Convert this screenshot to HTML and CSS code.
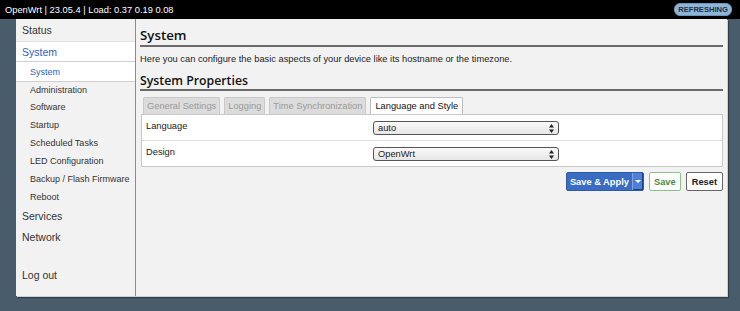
FILE: index.html
```html
<!DOCTYPE html>
<html>
<head>
<meta charset="utf-8">
<link rel="stylesheet" href="styles.css">
</head>
<body>
<header class="topbar">
  <span class="brand">OpenWrt | 23.05.4 | Load: 0.37 0.19 0.08</span>
  <span class="badge">REFRESHING</span>
</header>
<div class="panel">
  <nav class="sidebar">
    <ul class="menu">
      <li class="top">Status</li>
      <li class="top active">System</li>
      <li class="sub current">System</li>
      <li class="sub">Administration</li>
      <li class="sub">Software</li>
      <li class="sub">Startup</li>
      <li class="sub">Scheduled Tasks</li>
      <li class="sub">LED Configuration</li>
      <li class="sub">Backup / Flash Firmware</li>
      <li class="sub">Reboot</li>
      <li class="top">Services</li>
      <li class="top">Network</li>
      <li class="top logout">Log out</li>
    </ul>
  </nav>
  <main class="content">
    <h2 class="title">System</h2>
    <p class="desc">Here you can configure the basic aspects of your device like its hostname or the timezone.</p>
    <h3 class="section">System Properties</h3>
    <div class="tabs">
      <span class="tab">General Settings</span>
      <span class="tab">Logging</span>
      <span class="tab">Time Synchronization</span>
      <span class="tab active">Language and Style</span>
    </div>
    <div class="table">
      <div class="row">
        <span class="label">Language</span>
        <span class="select">auto<svg class="arrows" viewBox="0 0 5 9" width="5" height="9"><path d="M0 3.6 L2.5 0 L5 3.6 Z M0 5.4 L2.5 9 L5 5.4 Z" fill="#222"/></svg></span>
      </div>
      <div class="row">
        <span class="label">Design</span>
        <span class="select">OpenWrt<svg class="arrows" viewBox="0 0 5 9" width="5" height="9"><path d="M0 3.6 L2.5 0 L5 3.6 Z M0 5.4 L2.5 9 L5 5.4 Z" fill="#222"/></svg></span>
      </div>
    </div>
    <div class="actions">
      <span class="btn apply"><span class="apply-main">Save &amp; Apply</span><span class="apply-drop"><span class="caret"></span></span></span>
      <span class="btn save">Save</span>
      <span class="btn reset">Reset</span>
    </div>
  </main>
</div>
</body>
</html>
```
FILE: styles.css
```css
html, body {
  margin: 0;
  padding: 0;
}
body {
  background: #485c6c;
  font-family: "Liberation Sans", Arial, sans-serif;
  color: #222;
  width: 740px;
  height: 311px;
  overflow: hidden;
}
.topbar {
  height: 19px;
  background: #000;
  color: #fff;
  display: flex;
  align-items: center;
  justify-content: space-between;
  padding: 0 8px 0 5px;
  font-size: 9.3px;
}
.badge {
  background: #8fb5d6;
  color: #1d2f45;
  font-weight: bold;
  font-size: 7.6px;
  border-radius: 6px;
  padding: 1px 3px;
  border: 1px solid #6f98bd;
  line-height: 9px;
}
.panel {
  margin: 0 13px 0 16px;
  height: 277px;
  background: #f2f2f2;
  display: flex;
  box-shadow: 1px 1px 0 #cfcfcf, 2px 2px 1px #2f3d48;
}
.sidebar {
  width: 119px;
  border-right: 1px solid #8a8a8a;
  flex: none;
}
.menu {
  list-style: none;
  margin: 0;
  padding: 0;
}
.menu li {
  display: flex;
  align-items: center;
  color: #333;
}
.top {
  font-size: 10.5px;
  padding-left: 6px;
  height: 21px;
}
.top:first-child {
  height: 22px;
}
.top.active {
  background: #fff;
  color: #2f62c4;
  height: 19px;
  border-top: 1px solid #e2e2e2;
  border-bottom: 1px solid #cfcfcf;
}
.sub {
  font-size: 9px;
  padding-left: 14px;
  height: 18px;
}
.sub.current {
  background: #fff;
  color: #2f62c4;
  height: 19px;
  border-bottom: 1px solid #cfcfcf;
}
.sub:nth-child(4) {
  height: 16px;
}
.sub:nth-child(10) {
  height: 17px;
}
.top.logout {
  margin-top: 17px;
}
.content {
  flex: 1;
  padding: 0 4px 0 4px;
  min-width: 0;
}
.title {
  font-family: "Open Sans", "DejaVu Sans", sans-serif;
  font-weight: 600;
  font-size: 13.3px;
  margin: 6px 0 0 0;
  height: 20px;
  line-height: 20px;
  border-bottom: 2px solid #6b6b6b;
  color: #111;
}
.desc {
  font-size: 9.3px;
  margin: 6px 0 0 0;
  line-height: 12px;
}
.section {
  font-family: "Open Sans", "DejaVu Sans", sans-serif;
  font-weight: 600;
  font-size: 12.3px;
  margin: 7px 0 0 0;
  line-height: 17px;
  height: 17px;
  border-bottom: 2px solid #6b6b6b;
  color: #111;
}
.tabs {
  display: flex;
  gap: 4px;
  margin-top: 6px;
  padding-left: 3px;
  height: 17px;
}
.tab {
  font-size: 9.3px;
  color: #9a9a9a;
  background: #dcdcdc;
  border: 1px solid #c8c8c8;
  border-bottom: none;
  border-radius: 2px 2px 0 0;
  padding: 0 3px;
  display: flex;
  align-items: center;
}
.tab.active {
  background: #fff;
  color: #111;
  border-color: #bdbdbd;
  padding: 0 4px;
}
.table {
  margin-left: 1px;
  background: #fff;
  border: 1px solid #c8c8c8;
}
.row {
  display: flex;
  align-items: center;
  height: 25px;
}
.row + .row {
  border-top: 1px solid #dedede;
}
.label {
  font-size: 9.3px;
  width: 227px;
  padding-left: 4px;
  margin-top: -3px;
}
.select {
  position: relative;
  width: 180px;
  height: 12px;
  border: 1px solid #555;
  border-radius: 3px;
  background: linear-gradient(#fafafa, #e6e6e6);
  font-size: 9.3px;
  line-height: 12px;
  padding-left: 4px;
  box-sizing: content-box;
}
.arrows {
  position: absolute;
  right: 4px;
  top: 2px;
}
.actions {
  display: flex;
  justify-content: flex-end;
  gap: 5px;
  margin-top: 5px;
}
.btn {
  height: 17px;
  font-size: 9.3px;
  font-weight: bold;
  display: flex;
  align-items: center;
  border-radius: 2px;
}
.apply {
  background: #3a6cc4;
  color: #fff;
  border: 1px solid #2d5aa8;
}
.apply-main {
  padding: 0 3px;
}
.apply-drop {
  width: 10px;
  height: 17px;
  background: #4f80d4;
  border-left: 1px solid #7ea2de;
  display: flex;
  align-items: center;
  justify-content: center;
  box-shadow: inset -1px -1px 0 #1f4584;
}
.caret {
  width: 0;
  height: 0;
  border-left: 3px solid transparent;
  border-right: 3px solid transparent;
  border-top: 3px solid #fff;
}
.save {
  background: #fff;
  color: #4a8a45;
  border: 1px solid #8cc088;
  padding: 0 4px;
}
.reset {
  background: #fff;
  color: #222;
  border: 1px solid #666;
  padding: 0 5px;
}
```
